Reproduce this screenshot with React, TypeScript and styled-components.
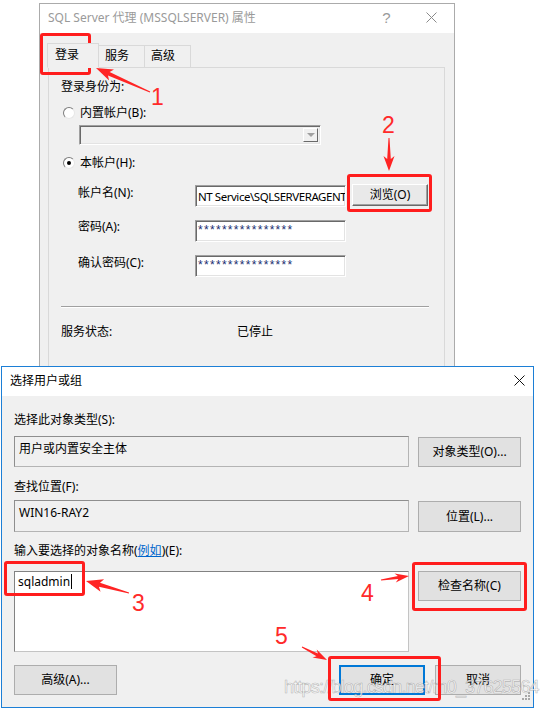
import React from "react";
import styled, { createGlobalStyle } from "styled-components";

const UI_FONT = `"Noto Sans", "Noto Sans CJK SC", sans-serif`;

const GlobalStyle = createGlobalStyle`
  html, body { margin: 0; padding: 0; background: #ffffff; }
  body { font-family: ${UI_FONT}; font-size: 12px; color: #000; }
  * { box-sizing: border-box; }
`;

const Desktop = styled.div`
  position: relative;
  width: 542px;
  height: 713px;
  overflow: hidden;
  background: #ffffff;
  font-family: ${UI_FONT};
  font-size: 12px;
  line-height: 16px;
  color: #000;
`;

const Window = styled.section<{ $left: number; $top: number; $w: number; $h: number; $border: string }>`
  position: absolute;
  left: ${(p) => p.$left}px;
  top: ${(p) => p.$top}px;
  width: ${(p) => p.$w}px;
  height: ${(p) => p.$h}px;
  border: 1px solid ${(p) => p.$border};
  background: #f0f0f0;
  display: flex;
  flex-direction: column;
  overflow: hidden;
`;

const TitleBar = styled.header`
  height: 29px;
  flex-shrink: 0;
  background: #ffffff;
  display: flex;
  align-items: center;
`;

const TitleText = styled.div<{ $dim?: boolean }>`
  flex: 1;
  padding-left: 8px;
  color: ${(p) => (p.$dim ? "#9a9a9a" : "#000")};
  white-space: nowrap;
  margin-top: -2px;
`;

const CaptionButton = styled.div<{ $w: number; $dim?: boolean }>`
  width: ${(p) => p.$w}px;
  height: 100%;
  display: flex;
  align-items: center;
  justify-content: center;
  color: ${(p) => (p.$dim ? "#9a9a9a" : "#000")};
  font-size: 15px;
  font-family: "Liberation Sans", sans-serif;
  margin-top: -2px;
`;

/* ---------- back window ---------- */
const BackBody = styled.div`
  flex: 1;
  display: flex;
  flex-direction: column;
  padding: 10px 9px 0 7px;
`;

const TabStrip = styled.div`
  display: flex;
  align-items: flex-end;
  position: relative;
  z-index: 1;
  margin-bottom: -1px;
`;

const Tab = styled.div<{ $active?: boolean; $w: number }>`
  width: ${(p) => p.$w}px;
  height: ${(p) => (p.$active ? 25 : 23)}px;
  background: #f0f0f0;
  border: 1px solid #d9d9d9;
  border-left-width: ${(p) => (p.$active ? 1 : 0)}px;
  border-bottom-color: ${(p) => (p.$active ? "#f0f0f0" : "#d9d9d9")};
  padding-left: ${(p) => (p.$active ? 7 : 6)}px;
  display: flex;
  align-items: center;
  padding-bottom: ${(p) => (p.$active ? 2 : 1)}px;
`;

const TabPanel = styled.div`
  flex: 1;
  margin-left: 1px;
  border: 1px solid #d9d9d9;
  background: #f0f0f0;
  padding: 0 15px 0 12px;
  display: flex;
  flex-direction: column;
`;

const PanelHeading = styled.div`
  margin-top: 11px;
`;

const RadioRow = styled.label`
  margin-top: 10px;
  display: flex;
  align-items: center;
  gap: 5px;
  padding-left: 2px;
`;

const Radio = styled.span<{ $checked?: boolean }>`
  width: 12px;
  height: 12px;
  border-radius: 50%;
  border: 1px solid;
  border-color: #7c7c7c #e6e6e6 #e6e6e6 #7c7c7c;
  background: #ffffff;
  display: flex;
  align-items: center;
  justify-content: center;
  &::after {
    content: "";
    width: 4px;
    height: 4px;
    border-radius: 50%;
    background: ${(p) => (p.$checked ? "#000" : "transparent")};
  }
`;

const Combo = styled.div`
  margin-top: 4px;
  margin-left: 18px;
  width: 242px;
  height: 20px;
  border: 1px solid;
  border-color: #a0a0a0 #ffffff #ffffff #a0a0a0;
  box-shadow: inset 1px 1px #696969, inset -1px -1px #e3e3e3;
  background: #f0f0f0;
  display: flex;
  justify-content: flex-end;
  padding: 2px;
`;

const ComboArrow = styled.div`
  width: 15px;
  height: 100%;
  background: #f0f0f0;
  border: 1px solid;
  border-color: #ffffff #696969 #696969 #ffffff;
  display: flex;
  align-items: center;
  justify-content: center;
  &::after {
    content: "";
    border-left: 4px solid transparent;
    border-right: 4px solid transparent;
    border-top: 4px solid #a0a0a0;
  }
`;

const FieldRow = styled.div`
  margin-top: 13px;
  margin-left: 17px;
  display: flex;
  align-items: flex-start;
`;

const FieldLabel = styled.div<{ $offset?: number }>`
  width: 117px;
  margin-top: ${(p) => p.$offset ?? 0}px;
  white-space: nowrap;
`;

const ClassicInput = styled.div<{ $offset?: number }>`
  width: 151px;
  height: 22px;
  margin-top: ${(p) => p.$offset ?? 0}px;
  background: #ffffff;
  border: 1px solid;
  border-color: #a0a0a0 #ffffff #ffffff #a0a0a0;
  box-shadow: inset 1px 1px #696969, inset -1px -1px #e3e3e3;
  padding: 2px 0 0 2px;
  white-space: nowrap;
  overflow: hidden;
  line-height: 17px;
`;

const InputText = styled.span`
  font-size: 11.5px;
  letter-spacing: -0.45px;
`;

const Stars = styled.span`
  font-family: "Liberation Sans", sans-serif;
  font-size: 12px;
  letter-spacing: 1.3px;
  color: #1b2c70;
  line-height: 12px;
  display: block;
  padding-top: 1px;
`;

const ClassicButton = styled.div`
  width: 76px;
  height: 22px;
  margin-left: 6px;
  background: #e9e9e9;
  border: 1px solid;
  border-color: #ffffff #696969 #696969 #ffffff;
  box-shadow: inset -1px -1px #a0a0a0;
  display: flex;
  align-items: center;
  justify-content: center;
`;

const Separator = styled.hr`
  margin: 29px 0 0 0;
  border: none;
  border-top: 1px solid #a0a0a0;
  border-bottom: 1px solid #ffffff;
  height: 0;
`;

const StatusRow = styled.div`
  margin-top: 16px;
  display: flex;
`;

const StatusLabel = styled.div`
  width: 176px;
`;

/* ---------- front window ---------- */
const FrontBody = styled.div`
  flex: 1;
  display: flex;
  flex-direction: column;
  padding: 16px 12px 0 12px;
`;

const DialogLabel = styled.div<{ $gap: number }>`
  margin-top: ${(p) => p.$gap}px;
  white-space: nowrap;
`;

const Link = styled.span`
  color: #0066cc;
  text-decoration: underline;
`;

const DialogRow = styled.div<{ $gap: number }>`
  margin-top: ${(p) => p.$gap}px;
  display: flex;
  align-items: flex-start;
  gap: 9px;
`;

const ReadBox = styled.div<{ $h: number }>`
  width: 395px;
  height: ${(p) => p.$h}px;
  border: 1px solid;
  border-color: #8e8e8e #b4b4b4 #b4b4b4 #8e8e8e;
  background: #f0f0f0;
  padding: 4px 0 0 4px;
`;

const EditArea = styled.div`
  width: 395px;
  height: 81px;
  border: 1px solid;
  border-color: #828282 #c4c4c4 #c4c4c4 #828282;
  background: #ffffff;
  padding: 2px 0 0 3px;
  font-family: "Noto Sans", sans-serif;
`;

const Caret = styled.span`
  display: inline-block;
  width: 1px;
  height: 15px;
  background: #000;
  vertical-align: -3px;
  margin-left: 1px;
`;

const WinButton = styled.div<{ $w: number; $h?: number; $default?: boolean; $offset?: number }>`
  width: ${(p) => p.$w}px;
  height: ${(p) => p.$h ?? 30}px;
  margin-top: ${(p) => p.$offset ?? 0}px;
  background: #e1e1e1;
  border: ${(p) => (p.$default ? "2px solid #0078d7" : "1px solid #adadad")};
  display: flex;
  align-items: center;
  justify-content: center;
  flex-shrink: 0;
  white-space: nowrap;
`;

const ButtonBar = styled.div`
  margin-top: 13px;
  display: flex;
  align-items: center;
  gap: 10px;
`;

const Spacer = styled.div`
  flex: 1;
`;

const Watermark = styled.div`
  position: absolute;
  left: 284px;
  top: 679px;
  font-family: "Liberation Sans", sans-serif;
  font-size: 18px;
  letter-spacing: -0.8px;
  color: rgba(255, 255, 255, 0.75);
  -webkit-text-stroke: 0.6px rgba(120, 120, 120, 0.5);
  white-space: nowrap;
  pointer-events: none;
`;

const Grip = styled.svg`
  position: absolute;
  right: 3px;
  bottom: 7px;
`;

/* ---------- annotations ---------- */
const Overlay = styled.div`
  position: absolute;
  inset: 0;
  pointer-events: none;
`;

const RedBox = styled.div<{ $x: number; $y: number; $w: number; $h: number }>`
  position: absolute;
  left: ${(p) => p.$x}px;
  top: ${(p) => p.$y}px;
  width: ${(p) => p.$w}px;
  height: ${(p) => p.$h}px;
  border: 3px solid #ff1d1d;
  border-radius: 3px;
`;

const StepNumber = styled.span<{ $x: number; $y: number }>`
  position: absolute;
  left: ${(p) => p.$x}px;
  top: ${(p) => p.$y}px;
  font-family: "Liberation Sans", sans-serif;
  font-size: 23px;
  line-height: 23px;
  color: #ff2a2a;
`;

const ArrowLayer = styled.svg`
  position: absolute;
  left: 0;
  top: 0;
`;

function arrowPoints(x1: number, y1: number, x2: number, y2: number, head: number, hw: number, tw: number): string {
  const dx = x2 - x1;
  const dy = y2 - y1;
  const len = Math.sqrt(dx * dx + dy * dy);
  const ux = dx / len;
  const uy = dy / len;
  const nx = -uy;
  const ny = ux;
  const bx = x2 - ux * head;
  const by = y2 - uy * head;
  const cx = x2 - ux * (head + 3);
  const cy = y2 - uy * (head + 3);
  const pts: [number, number][] = [
    [x1 + nx * 0.5, y1 + ny * 0.5],
    [bx + nx * tw, by + ny * tw],
    [cx + nx * hw, cy + ny * hw],
    [x2, y2],
    [cx - nx * hw, cy - ny * hw],
    [bx - nx * tw, by - ny * tw],
    [x1 - nx * 0.5, y1 - ny * 0.5],
  ];
  return pts.map(([a, b]) => `${a.toFixed(1)},${b.toFixed(1)}`).join(" ");
}

const arrows = [
  { x1: 150, y1: 92, x2: 96, y2: 68, head: 14, hw: 6, tw: 2 },
  { x1: 389, y1: 138, x2: 389, y2: 171, head: 12, hw: 5.5, tw: 1.8 },
  { x1: 129, y1: 593, x2: 86, y2: 581, head: 14, hw: 6.5, tw: 2 },
  { x1: 381, y1: 580, x2: 409, y2: 576, head: 11, hw: 4.5, tw: 1.5 },
  { x1: 302, y1: 647, x2: 327, y2: 660, head: 11, hw: 4.5, tw: 1.5 },
];

const CloseGlyph: React.FC<{ color: string }> = ({ color }) => (
  <svg width="11" height="11" viewBox="0 0 11 11">
    <path d="M0.5 0.5 L10.5 10.5 M10.5 0.5 L0.5 10.5" stroke={color} strokeWidth="1" fill="none" />
  </svg>
);

export default function App() {
  return (
    <Desktop>
      <GlobalStyle />

      <Window $left={39} $top={3} $w={416} $h={420} $border="#ababab">
        <TitleBar>
          <TitleText $dim>SQL Server 代理 (MSSQLSERVER) 属性</TitleText>
          <CaptionButton $w={45} $dim>?</CaptionButton>
          <CaptionButton $w={45} $dim>
            <CloseGlyph color="#8a8a8a" />
          </CaptionButton>
        </TitleBar>
        <BackBody>
          <TabStrip>
            <Tab $active $w={52}>登录</Tab>
            <Tab $w={46}>服务</Tab>
            <Tab $w={46}>高级</Tab>
          </TabStrip>
          <TabPanel>
            <PanelHeading>登录身份为:</PanelHeading>
            <RadioRow>
              <Radio />
              内置帐户(B):
            </RadioRow>
            <Combo>
              <ComboArrow />
            </Combo>
            <RadioRow>
              <Radio $checked />
              本帐户(H):
            </RadioRow>
            <FieldRow>
              <FieldLabel $offset={1}>帐户名(N):</FieldLabel>
              <ClassicInput $offset={1}>
                <InputText>NT Service\SQLSERVERAGENT</InputText>
              </ClassicInput>
              <ClassicButton>浏览(O)</ClassicButton>
            </FieldRow>
            <FieldRow>
              <FieldLabel $offset={-1}>密码(A):</FieldLabel>
              <ClassicInput>
                <Stars>****************</Stars>
              </ClassicInput>
            </FieldRow>
            <FieldRow>
              <FieldLabel>确认密码(C):</FieldLabel>
              <ClassicInput>
                <Stars>****************</Stars>
              </ClassicInput>
            </FieldRow>
            <Separator />
            <StatusRow>
              <StatusLabel>服务状态:</StatusLabel>
              <div>已停止</div>
            </StatusRow>
          </TabPanel>
        </BackBody>
      </Window>

      <Window $left={1} $top={366} $w={533} $h={342} $border="#1c7fd6">
        <TitleBar>
          <TitleText>选择用户或组</TitleText>
          <CaptionButton $w={28}>
            <CloseGlyph color="#111" />
          </CaptionButton>
        </TitleBar>
        <FrontBody>
          <DialogLabel $gap={0}>选择此对象类型(S):</DialogLabel>
          <DialogRow $gap={8}>
            <ReadBox $h={31}>用户或内置安全主体</ReadBox>
            <WinButton $w={103} $offset={1}>对象类型(O)...</WinButton>
          </DialogRow>
          <DialogLabel $gap={12}>查找位置(F):</DialogLabel>
          <DialogRow $gap={5}>
            <ReadBox $h={32}>WIN16-RAY2</ReadBox>
            <WinButton $w={103} $h={31} $offset={1}>位置(L)...</WinButton>
          </DialogRow>
          <DialogLabel $gap={11}>
            输入要选择的对象名称(<Link>例如</Link>)(E):
          </DialogLabel>
          <DialogRow $gap={12}>
            <EditArea>
              sqladmin
              <Caret />
            </EditArea>
            <WinButton $w={103}>检查名称(C)</WinButton>
          </DialogRow>
          <ButtonBar>
            <WinButton $w={103}>高级(A)...</WinButton>
            <Spacer />
            <WinButton $w={86} $default>确定</WinButton>
            <WinButton $w={86}>取消</WinButton>
          </ButtonBar>
        </FrontBody>
        <Grip width="8" height="8" viewBox="0 0 8 8">
          {[
            [6, 0],
            [6, 3],
            [3, 3],
            [6, 6],
            [3, 6],
            [0, 6],
          ].map(([x, y], i) => (
            <rect key={i} x={x} y={y} width="2" height="2" fill="#a8a8a8" />
          ))}
        </Grip>
      </Window>

      <Watermark>https://blog.csdn.net/m0_37625564</Watermark>

      <Overlay>
        <RedBox $x={40} $y={33} $w={51} $h={42} />
        <RedBox $x={347} $y={174} $w={85} $h={38} />
        <RedBox $x={4} $y={561} $w={81} $h={35} />
        <RedBox $x={412} $y={562} $w={115} $h={49} />
        <RedBox $x={328} $y={656} $w={113} $h={45} />
        <ArrowLayer width="542" height="713" viewBox="0 0 542 713">
          {arrows.map((a, i) => (
            <polygon key={i} points={arrowPoints(a.x1, a.y1, a.x2, a.y2, a.head, a.hw, a.tw)} fill="#ff2424" />
          ))}
        </ArrowLayer>
        <StepNumber $x={151} $y={86}>1</StepNumber>
        <StepNumber $x={382} $y={114}>2</StepNumber>
        <StepNumber $x={132} $y={592}>3</StepNumber>
        <StepNumber $x={361} $y={582}>4</StepNumber>
        <StepNumber $x={275} $y={625}>5</StepNumber>
      </Overlay>
    </Desktop>
  );
}
